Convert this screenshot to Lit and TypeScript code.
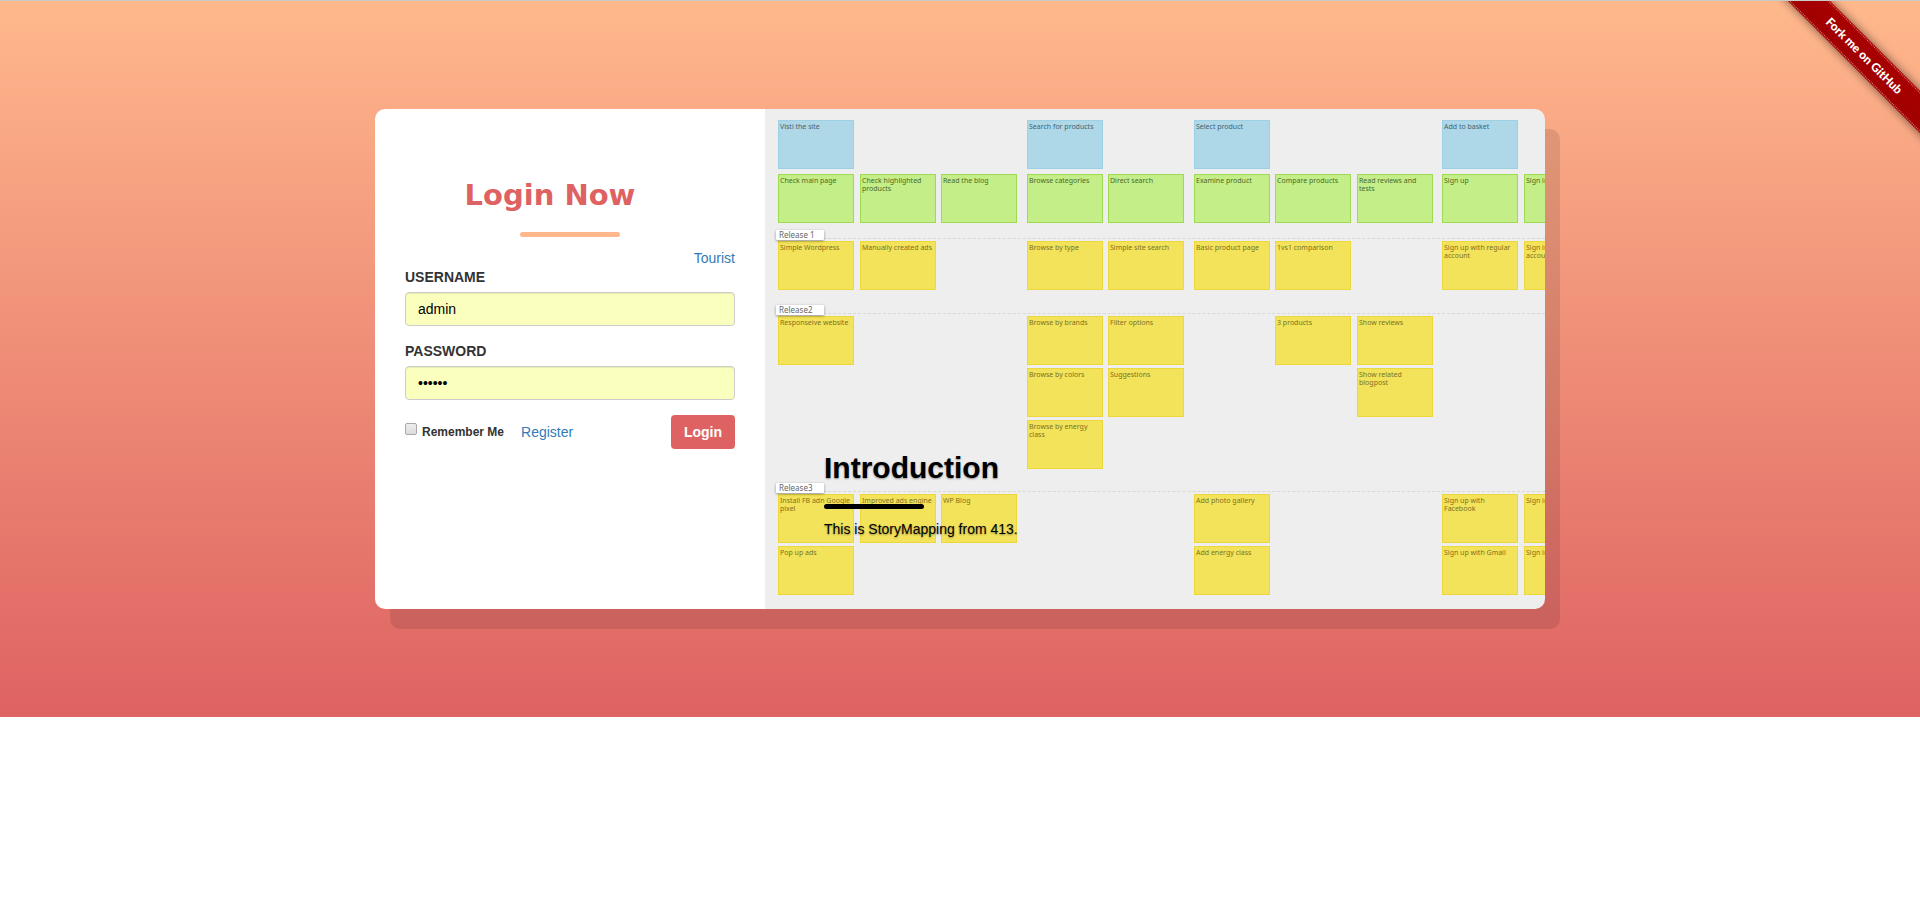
import { LitElement, html, css } from "lit";
import { customElement } from "lit/decorators.js";
import { classMap } from "lit/directives/class-map.js";

type Tone = "activity" | "task" | "story";
/** One row of the map: a note or an empty cell for each column. */
type Row = (string | null)[];

const activities: Row[] = [
  ["Visti the site", null, null, "Search for products", null, "Select product", null, null, "Add to basket", null],
];

const tasks: Row[] = [
  ["Check main page", "Check highlighted products", "Read the blog", "Browse categories", "Direct search",
    "Examine product", "Compare products", "Read reviews and tests", "Sign up", "Sign in"],
];

const releases: { name: string; size: string; rows: Row[] }[] = [
  {
    name: "Release 1",
    size: "short",
    rows: [
      ["Simple Wordpress", "Manually created ads", null, "Browse by type", "Simple site search",
        "Basic product page", "1vs1 comparison", null, "Sign up with regular account", "Sign in with regular account"],
    ],
  },
  {
    name: "Release2",
    size: "tall",
    rows: [
      ["Responseive website", null, null, "Browse by brands", "Filter options", null, "3 products", "Show reviews", null, null],
      [null, null, null, "Browse by colors", "Suggestions", null, null, "Show related blogpost", null, null],
      [null, null, null, "Browse by energy class", null, null, null, null, null, null],
    ],
  },
  {
    name: "Release3",
    size: "last",
    rows: [
      ["Install FB adn Google pixel", "Improved ads engine", "WP Blog", null, null,
        "Add photo gallery", null, null, "Sign up with Facebook", "Sign in"],
      ["Pop up ads", null, null, null, null, "Add energy class", null, null, "Sign up with Gmail", "Sign in"],
    ],
  },
];

@customElement("story-map")
export class StoryMap extends LitElement {
  static styles = css`
    :host {
      display: block;
      padding: 11px 0 14px 13px;
      overflow: hidden;
      background: #eee;
      font-family: "Noto Sans", sans-serif;
    }
    .rows {
      display: grid;
      grid-template-columns: 77px 76px 81px 76px 81px 76px 77px 80px 77px 76px;
      grid-auto-rows: 49px;
      gap: 3px 5px;
      width: max-content;
      margin-bottom: 5px;
    }
    .note {
      box-sizing: border-box;
      width: 76px;
      padding: 2px 0 0 1px;
      border: 1px solid;
      font-size: 7px;
      line-height: 8px;
    }
    .activity {
      background: #aed8e7;
      border-color: #9dd0e4;
      color: #43636f;
    }
    .task {
      background: #c3ee88;
      border-color: #9edb50;
      color: #4c6a28;
    }
    .story {
      background: #f3e35b;
      border-color: #ecd83a;
      color: #7d7220;
    }
    .release {
      position: relative;
      border-top: 1px dashed #d8d8d8;
      padding-top: 2px;
    }
    .release .rows {
      margin-bottom: 0;
    }
    .gap {
      height: 10px;
    }
    .short {
      padding-bottom: 23px;
    }
    .tall {
      padding-bottom: 22px;
    }
    .tag {
      position: absolute;
      left: -2px;
      top: -9px;
      width: 48px;
      height: 10px;
      box-sizing: border-box;
      padding-left: 3px;
      border-radius: 1px;
      background: #fff;
      box-shadow: 0 1px 3px rgba(0, 0, 0, 0.4);
      color: #666;
      font-size: 8px;
      font-weight: 400;
      line-height: 10px;
      margin: 0;
    }
  `;

  private renderRows(rows: Row[], tone: Tone) {
    return html`<div class="rows">
      ${rows.flat().map((text) =>
        text === null
          ? html`<div></div>`
          : html`<div class=${classMap({ note: true, [tone]: true })}>${text}</div>`
      )}
    </div>`;
  }

  render() {
    return html`
      ${this.renderRows(activities, "activity")}
      ${this.renderRows(tasks, "task")}
      <div class="gap"></div>
      ${releases.map(
        (release) => html`<section class="release ${release.size}">
          ${this.renderRows(release.rows, "story")}
          <h3 class="tag">${release.name}</h3>
        </section>`
      )}
    `;
  }
}

@customElement("login-form")
export class LoginForm extends LitElement {
  static styles = css`
    :host {
      display: block;
      box-sizing: border-box;
      padding: 70px 30px 50px;
      background: #fff;
    }
    .title {
      margin: 0;
      padding-right: 40px;
      color: #de6262;
      font-family: "DejaVu Sans", sans-serif;
      font-size: 29px;
      font-weight: 700;
      line-height: 33px;
      text-align: center;
    }
    .rule {
      width: 100px;
      height: 5px;
      margin: 20px auto 12px;
      border-radius: 3px;
      background: #ffb88c;
    }
    a {
      color: #337ab7;
      text-decoration: none;
    }
    .guest {
      line-height: 18px;
      text-align: right;
    }
    .field {
      margin-bottom: 15px;
    }
    .label {
      display: block;
      margin-bottom: 5px;
      font-weight: 700;
      text-transform: uppercase;
    }
    .input {
      display: block;
      box-sizing: border-box;
      width: 100%;
      height: 34px;
      padding: 6px 12px;
      border: 1px solid #ccc;
      border-radius: 4px;
      background: #faffbd;
      box-shadow: inset 0 1px 1px rgba(0, 0, 0, 0.075);
      color: #000;
      font: inherit;
    }
    .actions {
      display: flex;
      align-items: center;
    }
    .remember {
      display: flex;
      align-items: center;
      gap: 5px;
      margin-right: 17px;
      font-size: 12px;
      font-weight: 700;
    }
    .check {
      appearance: none;
      box-sizing: border-box;
      width: 12px;
      height: 12px;
      margin: 0 0 6px;
      border: 1px solid #a8a8a8;
      border-radius: 2px;
      background: linear-gradient(#eee, #dcdcdc);
    }
    .submit {
      margin-left: auto;
      padding: 6px 12px;
      border: 1px solid transparent;
      border-radius: 4px;
      background: #de6262 border-box;
      color: #fff;
      font: inherit;
      font-weight: 700;
    }
  `;

  render() {
    return html`
      <h2 class="title">Login Now</h2>
      <div class="rule"></div>
      <form @submit=${(e: Event) => e.preventDefault()}>
        <div class="guest"><a href="#tourist">Tourist</a></div>
        <div class="field">
          <label class="label" for="username">Username</label>
          <input class="input" id="username" type="text" value="admin" />
        </div>
        <div class="field">
          <label class="label" for="password">Password</label>
          <input class="input" id="password" type="password" value="123456" />
        </div>
        <div class="actions">
          <label class="remember"><input class="check" type="checkbox" />Remember Me</label>
          <a href="#register">Register</a>
          <button class="submit" type="submit">Login</button>
        </div>
      </form>
    `;
  }
}

@customElement("app-root")
export class AppRoot extends LitElement {
  static styles = css`
    :host {
      display: block;
      position: relative;
      color: #333;
      font-family: "Liberation Sans", Arial, sans-serif;
      font-size: 14px;
      line-height: 20px;
    }
    .hero {
      padding: 108px 15px;
      border-top: 1px solid #c9cbc6;
      background: linear-gradient(#ffb88c, #de6262);
    }
    .card {
      display: grid;
      grid-template-columns: 1fr 2fr;
      max-width: 1170px;
      min-height: 500px;
      margin: 0 auto;
      border-radius: 10px;
      box-shadow: 15px 20px 0 rgba(0, 0, 0, 0.1);
    }
    .login {
      border-radius: 10px 0 0 10px;
    }
    .banner {
      position: relative;
      display: grid;
      min-width: 0;
      overflow: hidden;
      border-radius: 0 10px 10px 0;
    }
    .intro {
      position: absolute;
      left: 59px;
      bottom: 70px;
      color: #000;
      text-shadow: 0 1px 2px rgba(0, 0, 0, 0.4);
    }
    .heading {
      margin: 0;
      font-size: 30px;
      font-weight: 700;
      line-height: 33px;
    }
    .rule {
      width: 100px;
      height: 5px;
      margin: 20px 0 10px;
      border-radius: 3px;
      background: #000;
    }
    .text {
      margin: 0;
    }
    .corner {
      position: absolute;
      top: 1px;
      right: 0;
      width: 149px;
      height: 149px;
      overflow: hidden;
    }
    .ribbon {
      position: absolute;
      top: 40px;
      right: -54px;
      width: 220px;
      box-sizing: border-box;
      padding: 1px 0;
      background: linear-gradient(#a80000, #a00000);
      box-shadow: 0 0 8px 1px rgba(0, 0, 0, 0.45);
      transform: rotate(45deg);
      color: #fff;
      font-family: Lato, sans-serif;
      font-size: 12px;
      font-weight: 900;
      text-align: center;
      text-decoration: none;
    }
    .stitch {
      display: block;
      padding: 3px 0;
      border: 1px dotted #e08080;
      border-width: 1px 0;
    }
  `;

  render() {
    return html`
      <main class="hero">
        <div class="card">
          <login-form class="login"></login-form>
          <div class="banner">
            <story-map></story-map>
            <div class="intro">
              <h2 class="heading">Introduction</h2>
              <div class="rule"></div>
              <p class="text">This is StoryMapping from 413.</p>
            </div>
          </div>
        </div>
      </main>
      <div class="corner">
        <a class="ribbon" href="#github"><span class="stitch">Fork me on GitHub</span></a>
      </div>
    `;
  }
}
